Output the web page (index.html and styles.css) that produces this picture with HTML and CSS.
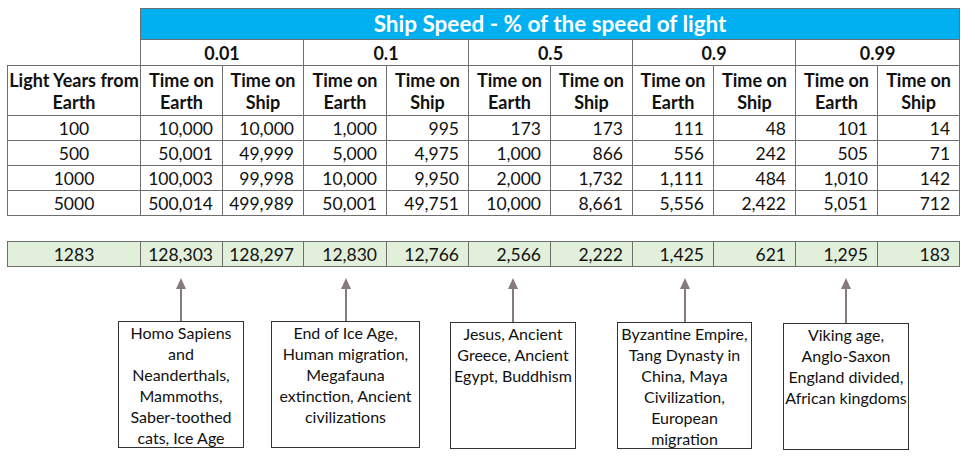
FILE: index.html
```html
<!DOCTYPE html>
<html>
<head>
<meta charset="utf-8">
<link rel="stylesheet" href="styles.css">
</head>
<body>
<div class="page">
  <table class="grid">
    <colgroup>
      <col class="c-first"><col class="c82"><col class="c81"><col class="c83"><col class="c82"><col class="c82"><col class="c82"><col class="c81"><col class="c82"><col class="c82"><col class="c82">
    </colgroup>
    <tr class="r-title">
      <td class="blank"></td>
      <td class="title" colspan="10">Ship Speed - % of the speed of light</td>
    </tr>
    <tr class="r-speed">
      <td class="blank"></td>
      <td class="speed" colspan="2">0.01</td>
      <td class="speed" colspan="2">0.1</td>
      <td class="speed" colspan="2">0.5</td>
      <td class="speed" colspan="2">0.9</td>
      <td class="speed" colspan="2">0.99</td>
    </tr>
    <tr class="r-head">
      <th>Light Years from<br>Earth</th>
      <th>Time on<br>Earth</th><th>Time on<br>Ship</th>
      <th>Time on<br>Earth</th><th>Time on<br>Ship</th>
      <th>Time on<br>Earth</th><th>Time on<br>Ship</th>
      <th>Time on<br>Earth</th><th>Time on<br>Ship</th>
      <th>Time on<br>Earth</th><th>Time on<br>Ship</th>
    </tr>
    <tr class="r-data"><td class="ly">100</td><td>10,000</td><td>10,000</td><td>1,000</td><td>995</td><td>173</td><td>173</td><td>111</td><td>48</td><td>101</td><td>14</td></tr>
    <tr class="r-data"><td class="ly">500</td><td>50,001</td><td>49,999</td><td>5,000</td><td>4,975</td><td>1,000</td><td>866</td><td>556</td><td>242</td><td>505</td><td>71</td></tr>
    <tr class="r-data"><td class="ly">1000</td><td>100,003</td><td>99,998</td><td>10,000</td><td>9,950</td><td>2,000</td><td>1,732</td><td>1,111</td><td>484</td><td>1,010</td><td>142</td></tr>
    <tr class="r-data"><td class="ly">5000</td><td>500,014</td><td>499,989</td><td>50,001</td><td>49,751</td><td>10,000</td><td>8,661</td><td>5,556</td><td>2,422</td><td>5,051</td><td>712</td></tr>
  </table>

  <table class="grid green">
    <colgroup>
      <col class="c-first"><col class="c82"><col class="c81"><col class="c83"><col class="c82"><col class="c82"><col class="c82"><col class="c81"><col class="c82"><col class="c82"><col class="c82">
    </colgroup>
    <tr class="r-data"><td class="ly">1283</td><td>128,303</td><td>128,297</td><td>12,830</td><td>12,766</td><td>2,566</td><td>2,222</td><td>1,425</td><td>621</td><td>1,295</td><td>183</td></tr>
  </table>

  <div class="callouts">
    <div class="callout co1">
      <svg class="arrow" width="12" height="43" viewBox="0 0 12 43"><polygon points="6,0 11,11 1,11" fill="#857b7b"/><line x1="6" y1="10" x2="6" y2="43" stroke="#857b7b" stroke-width="2"/></svg>
      <div class="box">Homo Sapiens<br>and<br>Neanderthals,<br>Mammoths,<br>Saber-toothed<br>cats, Ice Age</div>
    </div>
    <div class="callout co2">
      <svg class="arrow" width="12" height="43" viewBox="0 0 12 43"><polygon points="6,0 11,11 1,11" fill="#857b7b"/><line x1="6" y1="10" x2="6" y2="43" stroke="#857b7b" stroke-width="2"/></svg>
      <div class="box">End of Ice Age,<br>Human migration,<br>Megafauna<br>extinction, Ancient<br>civilizations</div>
    </div>
    <div class="callout co3">
      <svg class="arrow" width="12" height="44" viewBox="0 0 12 44"><polygon points="6,0 11,11 1,11" fill="#857b7b"/><line x1="6" y1="10" x2="6" y2="44" stroke="#857b7b" stroke-width="2"/></svg>
      <div class="box">Jesus, Ancient<br>Greece, Ancient<br>Egypt, Buddhism</div>
    </div>
    <div class="callout co4">
      <svg class="arrow" width="12" height="44" viewBox="0 0 12 44"><polygon points="6,0 11,11 1,11" fill="#857b7b"/><line x1="6" y1="10" x2="6" y2="44" stroke="#857b7b" stroke-width="2"/></svg>
      <div class="box">Byzantine Empire,<br>Tang Dynasty in<br>China, Maya<br>Civilization,<br>European<br>migration</div>
    </div>
    <div class="callout co5">
      <svg class="arrow" width="12" height="45" viewBox="0 0 12 45"><polygon points="6,0 11,11 1,11" fill="#857b7b"/><line x1="6" y1="10" x2="6" y2="45" stroke="#857b7b" stroke-width="2"/></svg>
      <div class="box">Viking age,<br>Anglo-Saxon<br>England divided,<br>African kingdoms</div>
    </div>
  </div>
</div>
</body>
</html>
```
FILE: styles.css
```css
html, body {
  margin: 0;
  padding: 0;
  background: #ffffff;
}
body {
  font-family: Lato, "Open Sans", "Liberation Sans", sans-serif;
  color: #111111;
}
.page {
  padding: 8px 0 0 7px;
  width: 968px;
}
.grid {
  border-collapse: collapse;
  table-layout: fixed;
  width: 952px;
}
.c-first { width: 133px; }
.c82 { width: 82px; }
.c81 { width: 81px; }
.c83 { width: 83px; }
.grid td, .grid th {
  border: 1px solid #6e6e6e;
  padding: 0;
  font-size: 17.5px;
  overflow: hidden;
  white-space: nowrap;
}
.grid td.blank {
  border: none;
  border-bottom: 1px solid #6e6e6e;
}
.grid .r-title td.blank { border-bottom: none; }
.r-title { height: 31px; }
.grid .title {
  background: #00b0f0;
  color: #ffffff;
  font-weight: 700;
  font-size: 22.5px;
  text-align: center;
  line-height: 28px;
}
.r-speed { height: 26px; }
.grid .speed {
  font-weight: 700;
  font-size: 18px;
  text-align: center;
  line-height: 24px;
}
.r-head { height: 50px; }
.grid .r-head th {
  font-weight: 700;
  font-size: 18px;
  text-align: center;
  line-height: 22px;
}
.r-data { height: 25px; }
.grid .r-data td {
  text-align: right;
  padding-right: 9px;
  line-height: 23px;
}
.grid .r-data td.ly {
  text-align: center;
  padding-right: 0;
}
.green {
  margin-top: 25px;
}
.grid.green td {
  background: #e2efda;
}
.callouts {
  display: flex;
  align-items: flex-start;
  padding-top: 11px;
  margin-left: -7px;
}
.callout {
  display: flex;
  flex-direction: column;
  align-items: center;
}
.arrow { display: block; }
.box {
  box-sizing: border-box;
  height: 127px;
  border: 1.5px solid #333333;
  font-size: 16px;
  line-height: 21px;
  text-align: center;
  white-space: nowrap;
  color: #111111;
  background: #ffffff;
}
.co1 { margin-left: 118px; }
.co1 .box { width: 126px; }
.co2 { margin-left: 27px; }
.co2 .box { width: 149px; }
.co3 { margin-left: 30px; }
.co3 .box { width: 126px; }
.co4 { margin-left: 41px; }
.co4 .box { width: 135px; }
.co5 { margin-left: 31px; }
.co5 .box { width: 126px; }
```
